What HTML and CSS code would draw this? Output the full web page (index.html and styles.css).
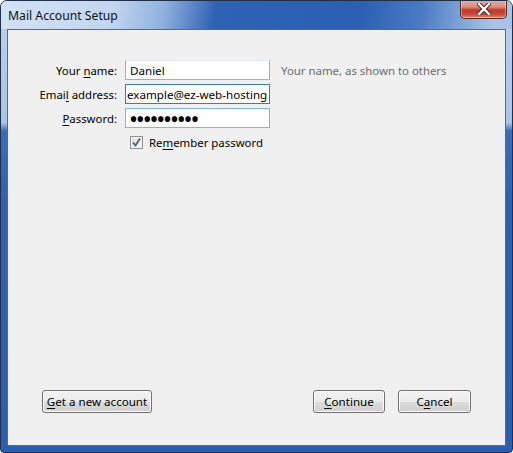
FILE: index.html
```html
<!DOCTYPE html>
<html>
<head>
    <meta charset="UTF-8">
    <title>Mail Account Setup</title>
    <link rel="stylesheet" href="styles.css">
</head>
<body>
    <div class="window">
        <div class="titlebar">
            <span class="title">Mail Account Setup</span>
            <a href="javascript:;" class="close">
                <svg width="14" height="12" viewBox="0 0 14 12">
                    <path d="M2 1 L12 11 M12 1 L2 11" stroke="#3a2020" stroke-width="4.2" stroke-linecap="square"/>
                    <path d="M2 1 L12 11 M12 1 L2 11" stroke="#fff" stroke-width="2.4" stroke-linecap="square"/>
                </svg>
            </a>
        </div>
        <div class="content">
            <div class="form">
                <label class="label" for="name">Your <u>n</u>ame:</label>
                <input class="field" id="name" type="text" value="Daniel">
                <span class="hint">Your name, as shown to others</span>

                <label class="label" for="email">Emai<u>l</u> address:</label>
                <input class="field focus" id="email" type="text" value="example@ez-web-hosting">
                <span></span>

                <label class="label" for="pass"><u>P</u>assword:</label>
                <input class="field hover" id="pass" type="password" value="abcdefghij">
                <span></span>

                <span></span>
                <label class="remember">
                    <span class="check">
                        <svg width="11" height="11" viewBox="0 0 11 11">
                            <path d="M2 5.5 L4.5 8.5 L9 1.5" fill="none" stroke="#4d6185" stroke-width="1.8"/>
                        </svg>
                    </span>
                    <span>Re<u>m</u>ember password</span>
                </label>
            </div>
            <div class="actions">
                <button class="btn btn-new"><u>G</u>et a new account</button>
                <div class="right">
                    <button class="btn btn-continue"><u>C</u>ontinue</button>
                    <button class="btn btn-cancel">C<u>a</u>ncel</button>
                </div>
            </div>
        </div>
    </div>
</body>
</html>
```

FILE: styles.css
```css
* {
    margin: 0;
    padding: 0;
    box-sizing: border-box;
}
body {
    width: 513px;
    height: 453px;
    font-family: "Noto Sans", "Open Sans", sans-serif;
    font-size: 11.4px;
    color: #000;
    background: #fff;
}
u {
    text-decoration: underline;
    text-underline-offset: 2px;
}

/* 窗口外框 */
.window {
    display: flex;
    flex-direction: column;
    width: 513px;
    height: 453px;
    border: 1px solid #1f2f47;
    border-radius: 7px 7px 4px 4px;
    background: linear-gradient(to bottom, #bcd1ec 0, #a9c4e6 122px, #3a6cbb 130px, #2d61b4 200px, #2b5eb0 100%);
    overflow: hidden;
}
.titlebar {
    display: flex;
    justify-content: space-between;
    align-items: flex-start;
    height: 28px;
    background: linear-gradient(100deg, #d3e2f4 0, #c2d6ef 22%, #8fb0de 32%, #2f62b5 42%, #2c5fb3 70%, #4b7bc4 82%, #a9c3e6 96%);
}
.title {
    padding: 6px 0 0 7px;
    font-size: 12.2px;
    color: #111;
}
.close {
    display: flex;
    align-items: center;
    justify-content: center;
    width: 47px;
    height: 19px;
    margin: -1px 5px 0 0;
    border: 1px solid #5a2a24;
    border-top: none;
    border-radius: 0 0 5px 5px;
    background: linear-gradient(to bottom, #e8b3a8 0, #d98a7c 40%, #c0382a 55%, #c94a38 80%, #e08c70 100%);
    box-shadow: inset 0 0 0 1px rgba(255, 255, 255, .35);
}

/* 内容区 */
.content {
    display: flex;
    flex: 1;
    flex-direction: column;
    justify-content: space-between;
    margin: 0 6px 6px;
    padding: 30px 0 32px;
    border: 1px solid #4f6b8f;
    background: #f0f0f0;
}
.form {
    display: grid;
    grid-template-columns: 109px 145px auto;
    column-gap: 8px;
    row-gap: 4px;
    align-items: center;
}
.label {
    text-align: right;
    white-space: nowrap;
}
.field {
    width: 145px;
    height: 20px;
    padding: 0 4px;
    border: 1px solid #abadb3;
    border-top-color: #e3e9ef;
    background: #fff;
    font-family: inherit;
    font-size: 11.6px;
    color: #000;
    outline: none;
}
.field.focus {
    border-color: #3d7bad;
    padding-left: 1px;
    padding-right: 0;
}
.field.hover {
    border-color: #7eb4ea;
}
#pass {
    padding-left: 3px;
    font-size: 24px;
    letter-spacing: -2.2px;
}
.hint {
    margin-left: 3px;
    color: #6d6d6d;
    white-space: nowrap;
}
.remember {
    display: flex;
    align-items: center;
    gap: 6px;
    height: 20px;
    padding-left: 5px;
    white-space: nowrap;
}
.check {
    display: flex;
    align-items: center;
    justify-content: center;
    width: 13px;
    height: 13px;
    border: 1px solid #8e8f8f;
    background: linear-gradient(to bottom right, #dcdcdc, #f6f6f6);
    box-shadow: inset 0 0 0 1px #f4f4f4;
}

/* 按钮 */
.actions {
    display: flex;
    justify-content: space-between;
    padding: 0 34px;
}
.right {
    display: flex;
    gap: 13px;
}
.btn {
    height: 23px;
    border: 1px solid #707070;
    border-radius: 3px;
    background: linear-gradient(to bottom, #f2f2f2 0, #ebebeb 50%, #dddddd 51%, #cfcfcf 100%);
    box-shadow: inset 0 0 0 1px #fcfcfc;
    font-family: inherit;
    font-size: 11.6px;
    color: #000;
}
.btn-new {
    width: 110px;
}
.btn-continue {
    width: 72px;
}
.btn-cancel {
    width: 73px;
}
```
